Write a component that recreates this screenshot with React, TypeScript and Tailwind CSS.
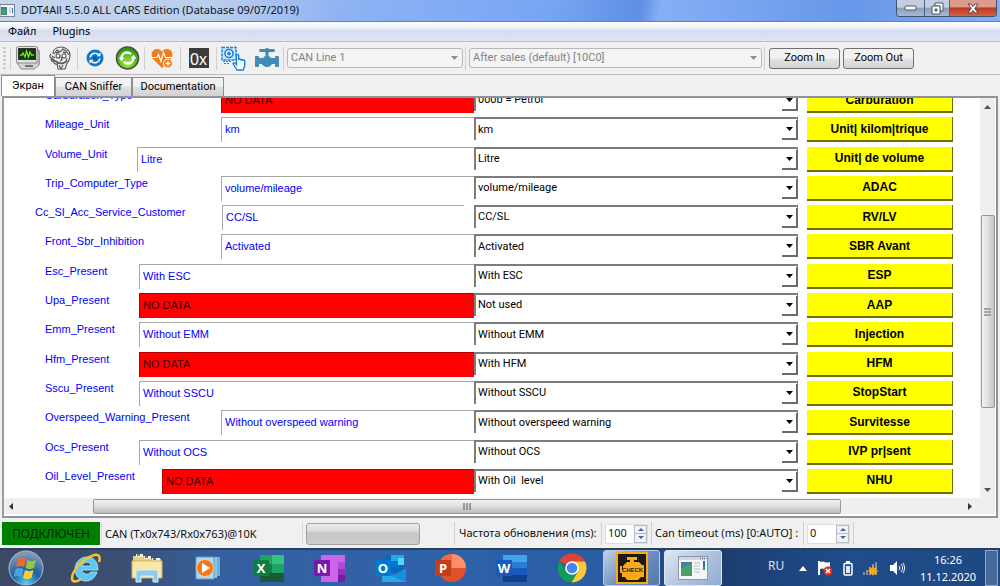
import { useState, type ReactNode } from 'react'
import clsx from 'clsx'

type Row = {
  label: string
  value: string
  option: string
  button: string
  field: string
  indent?: string
}

const WIDE = 'w-[335px]'
const NARROW = 'w-[253px]'

const ROWS: Row[] = [
  { label: 'Carburation_Type', value: 'NO DATA', option: '000b = Petrol', button: 'Carburation', field: NARROW },
  { label: 'Mileage_Unit', value: 'km', option: 'km', button: 'Unit| kilom|trique', field: NARROW },
  { label: 'Volume_Unit', value: 'Litre', option: 'Litre', button: 'Unit| de volume', field: 'w-[337px]' },
  { label: 'Trip_Computer_Type', value: 'volume/mileage', option: 'volume/mileage', button: 'ADAC', field: NARROW },
  {
    label: 'Cc_Sl_Acc_Service_Customer',
    value: 'CC/SL',
    option: 'CC/SL',
    button: 'RV/LV',
    field: 'w-[242px] mr-[10px]',
    indent: 'pl-[31px]',
  },
  { label: 'Front_Sbr_Inhibition', value: 'Activated', option: 'Activated', button: 'SBR Avant', field: NARROW },
  { label: 'Esc_Present', value: 'With ESC', option: 'With ESC', button: 'ESP', field: WIDE },
  { label: 'Upa_Present', value: 'NO DATA', option: 'Not used', button: 'AAP', field: WIDE },
  { label: 'Emm_Present', value: 'Without EMM', option: 'Without EMM', button: 'Injection', field: WIDE },
  { label: 'Hfm_Present', value: 'NO DATA', option: 'With HFM', button: 'HFM', field: WIDE },
  { label: 'Sscu_Present', value: 'Without SSCU', option: 'Without SSCU', button: 'StopStart', field: WIDE },
  {
    label: 'Overspeed_Warning_Present',
    value: 'Without overspeed warning',
    option: 'Without overspeed warning',
    button: 'Survitesse',
    field: NARROW,
  },
  { label: 'Ocs_Present', value: 'Without OCS', option: 'Without OCS', button: 'IVP pr|sent', field: WIDE },
  { label: 'Oil_Level_Present', value: 'NO DATA', option: 'With Oil\u00a0 level', button: 'NHU', field: 'w-[312px]' },
]

const TABS = ['Экран', 'CAN Sniffer', 'Documentation']

function TitleBar() {
  return (
    <header className="flex h-[22px] shrink-0 items-start justify-between border-b border-[#6c7f9e] bg-[linear-gradient(100deg,#c6d6ec_0%,#b9cdec_22%,#8fb3f3_34%,#77a5f4_55%,#5f8fe4_64%,#86aff5_66%,#6797ea_85%,#86aef0_100%)]">
      <div className="flex h-[21px] items-center gap-[6px]">
        <svg width="15" height="13" viewBox="0 0 15 13" aria-hidden="true">
          <rect x="0" y="0.5" width="14.5" height="12" fill="#f4f4f4" stroke="#7a8594" />
          <rect x="1" y="3" width="6" height="8" fill="#3f8a86" />
          <rect x="2" y="6" width="4" height="4" fill="#4d9e62" />
          <path d="M9 4h2M9 6h2M9 8h2" stroke="#b0b6bd" />
          <path d="M12.500 4v5" stroke="#2d6dc4" />
        </svg>
        <h1 className="text-[11px] text-[#0b1526]">DDT4All 5.5.0 ALL CARS Edition (Database 09/07/2019)</h1>
      </div>
      <div className="mr-[3px] flex h-[17px] overflow-hidden rounded-b-[4px] border border-t-0 border-[#3e5372]">
        <button aria-label="Minimize" className="flex w-[28px] items-center justify-center border-r border-[#4d6284] bg-[linear-gradient(#c3cfe0_45%,#8c9db8_50%,#a6b9d6)]">
          <svg width="13" height="6" viewBox="0 0 13 6"><rect x="1" y="1" width="11" height="4" rx="1" fill="#fff" stroke="#4b5567" /></svg>
        </button>
        <button aria-label="Restore" className="flex w-[25px] items-center justify-center border-r border-[#4d6284] bg-[linear-gradient(#c3cfe0_45%,#8c9db8_50%,#a6b9d6)]">
          <svg width="13" height="13" viewBox="0 0 13 13">
            <path d="M4 1h8v8h-3V4H4z" fill="#fff" stroke="#4b5567" />
            <path fillRule="evenodd" d="M1 4h8v8H1zM4 7v2h2V7z" fill="#fff" stroke="#4b5567" />
          </svg>
        </button>
        <button aria-label="Close" className="flex w-[46px] items-center justify-center bg-[linear-gradient(#dd9b8e_42%,#bd3a20_50%,#d4624a)]">
          <svg width="12" height="11" viewBox="0 0 12 11">
            <path d="M1 1h3l2 2.500L8 1h3L7.800 5.500 11 10H8L6 7.500 4 10H1l3.200-4.500z" fill="#fff" stroke="#53404a" />
          </svg>
        </button>
      </div>
    </header>
  )
}

function ToolButton({ label, wide, children }: { label: string; wide?: boolean; children: ReactNode }) {
  return (
    <button aria-label={label} title={label} className={clsx('flex h-full items-center justify-center', wide ? 'w-[35px]' : 'w-[33px]')}>
      {children}
    </button>
  )
}

function Separator() {
  return <span className="h-[23px] w-px shrink-0 bg-[#cfcfcf]" />
}

function ToolSelect({ label, value, className }: { label: string; value: string; className: string }) {
  return (
    <span className={clsx('relative flex h-[20px]', className)}>
      <select
        aria-label={label}
        disabled
        className="w-full appearance-none rounded-[3px] border border-[#b4b8bb] bg-[#f4f4f4] pl-[3px] font-['Roboto','Noto_Sans',sans-serif] text-[11px] text-[#838383] opacity-100"
      >
        <option>{value}</option>
      </select>
      <svg className="pointer-events-none absolute top-[8px] right-[5px]" width="7" height="4" viewBox="0 0 7 4" aria-hidden="true">
        <path d="M0 0h7L3.500 4z" fill="#8d8d8d" />
      </svg>
    </span>
  )
}

function Toolbar() {
  const zoomClasses =
    "h-[21px] w-[71px] rounded-[3px] border border-[#707070] bg-[linear-gradient(#f2f2f2_48%,#e3e3e3_52%,#d3d3d3)] font-['Roboto','Noto_Sans',sans-serif] text-[11px] text-black"

  return (
    <div className="flex h-[33px] shrink-0 items-center border-b border-[#bcbcbc] bg-[#f0f0f0]">
      <svg className="mr-[4px] ml-[3px]" width="3" height="24" viewBox="0 0 3 24" aria-hidden="true">
        <path d="M1.500 1v23" stroke="#b9b9b9" strokeWidth="2" strokeDasharray="2 2" />
      </svg>
      <Separator />
      <ToolButton label="Scan">
        <svg width="24" height="24" viewBox="0 0 24 24">
          <path d="M3 1h18l3 4v13l-4 2H5z" fill="#a9a9a9" />
          <rect x="0.500" y="0.500" width="21" height="17" rx="2" fill="#e2e2e2" stroke="#8b8b8b" />
          <rect x="2.500" y="2.500" width="17" height="11" fill="#12380f" stroke="#333" />
          <path d="M4 9h2l1-2 2 4 1.500-6 2 6L14 6l1.500 3H18" fill="none" stroke="#7be02c" strokeWidth="1.300" />
          <path d="M1 17l4 6h13l5-4V6l-2-2v13z" fill="#d4d4d4" stroke="#8b8b8b" />
          <path d="M9 20h8" stroke="#555" strokeWidth="1.500" />
        </svg>
      </ToolButton>
      <ToolButton label="Expert mode">
        <svg width="23" height="24" viewBox="0 0 23 24" fill="none" stroke="#555" strokeWidth="1.100">
          <path d="M4 8C4 3 8 1 12 1s9 3 9 8c0 4-1 6-3 8l-2 6H9l-1-5" fill="#ededed" />
          <path d="M5 8l3-4 3 2 3-3 3 2 3 4M2 8c-2 2-1 4 1 4-2 2 0 4 2 3-1 3 3 4 4 2l4 1 4-2 1-4" />
          <circle cx="9" cy="10" r="2" fill="#fff" />
          <circle cx="15" cy="10" r="2" fill="#fff" />
          <path d="M12 11l1 3-2 1M7 15c3 3 8 3 11-1M10 19l2 4 2-4M3 10l3 2" />
          <path d="M3 13c2 1 3 3 5 3M7 7l3-1M14 6l3 1" strokeWidth="1.600" />
        </svg>
      </ToolButton>
      <Separator />
      <ToolButton label="Refresh">
        <svg width="18" height="18" viewBox="0 0 18 18">
          <circle cx="9" cy="9" r="8.500" fill="#0f78cc" />
          <path d="M4.200 8.500a5 5 0 0 1 8.300-3M13.800 9.500a5 5 0 0 1-8.300 3" fill="none" stroke="#fff" strokeWidth="1.500" />
          <path d="M10.500 7.200h4V3.300zM7.500 10.800h-4v3.900z" fill="#fff" />
          <circle cx="9" cy="9" r="2" fill="#0a5fa8" />
        </svg>
      </ToolButton>
      <ToolButton label="Auto refresh">
        <svg width="25" height="24" viewBox="0 0 25 24">
          <defs>
            <radialGradient id="green" cx="50%" cy="75%" r="65%">
              <stop offset="0" stopColor="#a4ee3c" />
              <stop offset="1" stopColor="#2d9a15" />
            </radialGradient>
          </defs>
          <circle cx="12.500" cy="12" r="11" fill="url(#green)" stroke="#4a5548" strokeWidth="1.600" />
          <path d="M6.500 12.500c-.2-3.600 2.300-6 5.500-6 1.800 0 3.200.7 4.200 1.800" fill="none" stroke="#fff" strokeWidth="2.300" />
          <path d="M18.500 11.500c.2 3.600-2.300 6-5.500 6-1.800 0-3.200-.7-4.200-1.800" fill="none" stroke="#fff" strokeWidth="2.300" />
          <path d="M3.700 11.500h5.600L6.500 15.500zM21.300 12.500h-5.600l2.800-4z" fill="#fff" />
        </svg>
      </ToolButton>
      <Separator />
      <ToolButton label="Diagnostic" wide>
        <svg width="23" height="21" viewBox="0 0 23 21">
          <path d="M11 20L2 11C-1 7 1 1 6 1c2.500 0 4 1.300 5 3 1-1.700 2.500-3 5-3 5 0 7 6 4 10z" fill="#f07d18" />
          <path d="M0 9.500h6l1.500-3 2.500 7 2.500-9 2 5H22" fill="none" stroke="#fff" strokeWidth="1.200" />
          <circle cx="17" cy="15.500" r="4.500" fill="#f07d18" stroke="#fff" />
          <path d="M17 13v5M14.500 15.500h5" stroke="#fff" strokeWidth="1.300" />
        </svg>
      </ToolButton>
      <Separator />
      <ToolButton label="Hexadecimal" wide>
        <span className="flex h-[20px] w-[20px] items-end justify-center bg-[#3c3c3c] font-['Liberation_Sans',sans-serif] text-[16px] leading-[17px] text-white">
          0x
        </span>
      </ToolButton>
      <Separator />
      <ToolButton label="Command">
        <svg width="25" height="25" viewBox="0 0 25 25" fill="none" stroke="#1583e0">
          <rect x="1" y="1.500" width="14" height="12.500" fill="#cfe6fb" strokeDasharray="3 1" strokeWidth="1.500" />
          <circle cx="8" cy="7.500" r="4" fill="#fff" strokeWidth="1.600" />
          <circle cx="8" cy="7.500" r="1.500" fill="#1583e0" />
          <path d="M2 15.500h8M3 17.500h6" strokeDasharray="2 1" />
          <path d="M15.500 18V9.500c0-1.500 2.200-1.500 2.200 0V14c0-1.300 2-1.300 2 0v.5c0-1.300 2-1.300 2 0v.5c0-1.300 2-1.300 2 0v5l-1.500 4H16l-4-6.500c.5-1.500 2.500-.5 3.500 1z" fill="#fff" strokeWidth="1.400" />
        </svg>
      </ToolButton>
      <ToolButton label="Flow control">
        <svg width="24" height="20" viewBox="0 0 24 20" fill="#418bb5">
          <rect x="4" y="1" width="16" height="3" rx="1.500" />
          <circle cx="12" cy="2.500" r="2.500" />
          <rect x="10.500" y="4" width="3" height="5" />
          <rect x="0" y="8" width="4" height="11" rx="1" />
          <rect x="20" y="8" width="4" height="11" rx="1" />
          <path d="M4 10h4l2-2h4l2 2h4v6h-3c-1 2-3 3-5 3s-4-1-5-3H4z" />
        </svg>
      </ToolButton>
      <Separator />
      <ToolSelect label="CAN line" value="CAN Line 1" className="ml-[3px] w-[176px]" />
      <span className="ml-[2px] flex"><Separator /></span>
      <ToolSelect label="Session" value="After sales (default) [10C0]" className="ml-[3px] w-[293px]" />
      <span className="ml-[2px] flex"><Separator /></span>
      <div className="ml-[4px] flex gap-[3px]">
        <button className={zoomClasses}>Zoom In</button>
        <button className={zoomClasses}>Zoom Out</button>
      </div>
    </div>
  )
}

function ParameterRow({ row }: { row: Row }) {
  const missing = row.value === 'NO DATA'

  return (
    <div className="flex h-[25px] shrink-0">
      <div className={clsx("flex w-[470px] shrink-0 justify-between font-['Liberation_Sans',Arial,sans-serif] text-[11px] whitespace-nowrap", row.indent ?? 'pl-[41px]')}>
        <label htmlFor={row.label} className="leading-[15px] text-[#0000ff]">
          {row.label}
        </label>
        <output
          className={clsx(
            'shrink-0 border-t border-l pl-[3px] leading-[23px]',
            row.field,
            missing ? 'border-[#b40000] bg-[#ff0000] text-[#3c0000]' : 'border-[#a8a8a8] bg-white text-[#0000ff]',
          )}
        >
          {row.value}
        </output>
      </div>
      <div className="relative flex h-[23px] min-w-0 flex-1">
        <select
          id={row.label}
          className="w-full appearance-none border-t-2 border-r border-l-2 border-[#7d7d7d] bg-white pl-[2px] font-['Roboto','Noto_Sans',sans-serif] text-[11px] text-black"
        >
          <option>{row.option}</option>
        </select>
        <span className="pointer-events-none absolute right-0 bottom-0 flex h-[20px] w-[16px] items-center justify-center border-r-2 border-b-2 border-[#6c6c6c]">
          <svg width="7" height="4" viewBox="0 0 7 4" aria-hidden="true">
            <path d="M0 0h7L3.500 4z" fill="#000" />
          </svg>
        </span>
      </div>
      <button className="mr-[27px] ml-[9px] w-[146px] shrink-0 border-r border-b-2 border-[#6f6f00] bg-[#ffff00] font-['Liberation_Sans','DejaVu_Sans',sans-serif] text-[12px] font-bold text-black">
        {row.button}
      </button>
    </div>
  )
}

function VerticalScrollbar() {
  return (
    <div aria-hidden="true" className="flex w-[15px] shrink-0 flex-col items-center bg-[#efefef]">
      <svg className="mt-[7px]" width="7" height="4" viewBox="0 0 7 4"><path d="M0 4h7L3.500 0z" fill="#555" /></svg>
      <div className="flex-[107]" />
      <div className="flex w-[14px] flex-[192] items-center justify-center rounded-[2px] border border-[#979797] bg-[linear-gradient(90deg,#f3f3f3,#e0e0e2_50%,#c4c4c8)]">
        <svg width="7" height="8" viewBox="0 0 7 8"><path d="M0 1h7M0 4h7M0 7h7" stroke="#666" /></svg>
      </div>
      <div className="flex-[80]" />
      <svg className="mb-[6px]" width="7" height="4" viewBox="0 0 7 4"><path d="M0 0h7L3.500 4z" fill="#555" /></svg>
    </div>
  )
}

function HorizontalScrollbar() {
  return (
    <div aria-hidden="true" className="flex h-[16px] shrink-0 items-center bg-[#efefef] pr-[23px] pl-[5px]">
      <svg width="4" height="7" viewBox="0 0 4 7"><path d="M4 0v7L0 3.500z" fill="#333" /></svg>
      <div className="flex-[80]" />
      <div className="flex h-[15px] flex-[748] items-center justify-center rounded-[2px] border border-[#979797] bg-[linear-gradient(#f3f3f3,#dcdcde_50%,#bcbcc0)]">
        <svg width="8" height="7" viewBox="0 0 8 7"><path d="M1 0v7M4 0v7M7 0v7" stroke="#555" /></svg>
      </div>
      <div className="flex-[127]" />
      <svg width="4" height="7" viewBox="0 0 4 7"><path d="M0 0v7L4 3.500z" fill="#333" /></svg>
    </div>
  )
}

function SpinBox({ id, initial }: { id: string; initial: number }) {
  const [value, setValue] = useState(initial)

  return (
    <span className="flex h-[20px] w-[43px] border border-[#dedede] bg-white">
      <input
        id={id}
        inputMode="numeric"
        value={value}
        onChange={(event) => setValue(Number.parseInt(event.currentTarget.value, 10) || 0)}
        className="w-[28px] min-w-0 bg-white pl-[2px] text-[11px] outline-none"
      />
      <span className="flex w-[13px] flex-col">
        <button aria-label="Increase" onClick={() => setValue(value + 1)} className="flex flex-1 items-center justify-center border border-[#b9bcc4] bg-[#f1f1f1]">
          <svg width="6" height="3" viewBox="0 0 6 3"><path d="M0 3h6L3 0z" fill="#4a62b0" /></svg>
        </button>
        <button aria-label="Decrease" onClick={() => setValue(Math.max(0, value - 1))} className="flex flex-1 items-center justify-center border border-t-0 border-[#b9bcc4] bg-[#f1f1f1]">
          <svg width="6" height="3" viewBox="0 0 6 3"><path d="M0 0h6L3 3z" fill="#4a62b0" /></svg>
        </button>
      </span>
    </span>
  )
}

function StatusBar() {
  return (
    <footer className="flex h-[29px] shrink-0 items-center bg-[#f0f0f0] pl-[2px] text-[11px] whitespace-nowrap text-[#111]">
      <span className="flex h-[23px] w-[98px] items-center justify-center bg-[#008000] text-[12px] text-[#00250a]">ПОДКЛЮЧЕН</span>
      <span className="ml-[1px] flex w-[202px] justify-between border-x border-[#dadada] pl-[3px] leading-[23px]">
        CAN (Tx0x743/Rx0x763)@10K
      </span>
      <div role="progressbar" aria-label="Progress" className="ml-[3px] h-[22px] w-[114px] rounded-[3px] border border-[#a0a0a0] bg-[linear-gradient(#ededed_0%,#dadada_35%,#c6c6c6_45%,#cdcdcd_100%)]" />
      <span className="ml-[34px] flex"><Separator /></span>
      <label htmlFor="refresh" className="w-[146px] pl-[4px]">Частота обновления (ms):</label>
      <Separator />
      <span className="mx-[3px] flex"><SpinBox id="refresh" initial={100} /></span>
      <Separator />
      <label htmlFor="timeout" className="w-[151px] pl-[3px]">Can timeout (ms) [0:AUTO] :</label>
      <Separator />
      <span className="mx-[3px] flex"><SpinBox id="timeout" initial={0} /></span>
      <Separator />
    </footer>
  )
}

function OfficeIcon({ letter, badge, children }: { letter: string; badge: string; children: ReactNode }) {
  return (
    <svg width="32" height="28" viewBox="0 0 32 28">
      {children}
      <rect x="1" y="6" width="16" height="16" rx="1" fill={badge} />
      <text x="9" y="18.500" textAnchor="middle" fontFamily="Open Sans, sans-serif" fontSize="13" fontWeight="700" fill="#fff">
        {letter}
      </text>
    </svg>
  )
}

const APPS: { name: string; icon: ReactNode }[] = [
  {
    name: 'Internet Explorer',
    icon: (
      <svg width="32" height="32" viewBox="0 0 32 32">
        <path fillRule="evenodd" d="M17 5c7 0 11 5 11 13H12c0 4 6 6 9 2h6c-2 6-6 9-11 9C9 29 5 23 5 17S10 5 17 5zM12 14h9c0-5-8-5-9 0z" fill="#5cc8f4" stroke="#b6ecff" strokeWidth="0.800" />
        <path d="M29 10c2-6-1-9-7-6C13 7 2 19 2 26c0 5 5 4 9 1" fill="none" stroke="#f6c32b" strokeWidth="2.500" />
      </svg>
    ),
  },
  {
    name: 'Explorer',
    icon: (
      <svg width="32" height="30" viewBox="0 0 32 30">
        <path d="M2 3h11l2 3h15v18H2z" fill="#e8cd7a" />
        <path d="M5 1h7v3H5z" fill="#f4f0dc" /><path d="M13 3h7v3h-7z" fill="#f4f0dc" /><path d="M21 5h8v3h-8z" fill="#f4f0dc" />
        <path d="M6 2h3" stroke="#2fae3b" strokeWidth="2" /><path d="M14 4h3" stroke="#d4452c" strokeWidth="2" /><path d="M22 6h3" stroke="#2e7fd0" strokeWidth="2" />
        <path d="M1 8h30v17H1z" fill="#f7e7a8" stroke="#d3b455" />
        <path d="M5 29V20c0-2 1-3 3-3h16c2 0 3 1 3 3v9h-5v-6H10v6z" fill="#8fcbef" stroke="#d5f0ff" />
      </svg>
    ),
  },
  {
    name: 'Media Player',
    icon: (
      <svg width="28" height="26" viewBox="0 0 28 26">
        <path d="M6 2h20v19H6z" fill="#6fb0d8" /><path d="M4 2h19v21H4z" fill="#8cc6e6" /><path d="M2 2h18v22H2z" fill="#a9d8f0" stroke="#5c9cc4" />
        <circle cx="11" cy="13" r="8.500" fill="#ee7a1b" stroke="#fbd1a2" />
        <path d="M8 8l8 5-8 5z" fill="#fff" />
      </svg>
    ),
  },
  {
    name: 'Excel',
    icon: (
      <OfficeIcon letter="X" badge="#107c41">
        <path d="M8 1h12v9H8z" fill="#21a366" /><path d="M20 1h12v9H20z" fill="#33c481" /><path d="M8 10h12v9H8z" fill="#1a7a47" /><path d="M20 10h12v9H20z" fill="#21a366" /><path d="M8 19h24v9H8z" fill="#185c37" />
      </OfficeIcon>
    ),
  },
  {
    name: 'OneNote',
    icon: (
      <OfficeIcon letter="N" badge="#7719aa">
        <path d="M8 1h24v27H8z" fill="#ca64ea" /><path d="M25 8h7v7h-7z" fill="#ae4bd5" /><path d="M25 15h7v6h-7z" fill="#9332bf" /><path d="M25 21h7v7h-7z" fill="#7719aa" />
      </OfficeIcon>
    ),
  },
  {
    name: 'Outlook',
    icon: (
      <OfficeIcon letter="O" badge="#0078d4">
        <path d="M11 1h19v17H11z" fill="#0a68b8" /><path d="M17 1h13v6H17z" fill="#28a8ea" /><path d="M24 4h6v7h-6z" fill="#50d9ff" /><path d="M17 7h7v6h-7z" fill="#0078d4" />
        <path d="M8 17l12 4 12-7v14H8z" fill="#1490df" /><path d="M8 18l24 10H8z" fill="#28a8ea" />
      </OfficeIcon>
    ),
  },
  {
    name: 'PowerPoint',
    icon: (
      <OfficeIcon letter="P" badge="#c43e1c">
        <path d="M18 0a14 14 0 0 0 0 28 14 14 0 0 0 14-14H18z" fill="#e0522c" /><path d="M18 0a14 14 0 0 1 14 14H18z" fill="#ff8f6b" /><path d="M4 14a14 14 0 0 1 14-14v14z" fill="#ed6c47" />
      </OfficeIcon>
    ),
  },
  {
    name: 'Word',
    icon: (
      <OfficeIcon letter="W" badge="#185abd">
        <path d="M8 1h24v7H8z" fill="#41a5ee" /><path d="M8 8h24v6H8z" fill="#2b7cd3" /><path d="M8 14h24v7H8z" fill="#185abd" /><path d="M8 21h24v7H8z" fill="#103f91" />
      </OfficeIcon>
    ),
  },
  {
    name: 'Chrome',
    icon: (
      <svg width="30" height="30" viewBox="0 0 30 30">
        <path d="M15 15L2.400 8A14.500 14.500 0 0 1 28 8.500H15z" fill="#db4437" />
        <path d="M15 15l6 3.500L14.500 29.500A14.500 14.500 0 0 1 2.400 8l6.600 10.500z" fill="#0f9d58" />
        <path d="M15 8.500h13a14.500 14.500 0 0 1-13.500 21L21 18.500z" fill="#fdc93a" />
        <circle cx="15" cy="15" r="6.800" fill="#fff" />
        <circle cx="15" cy="15" r="5.300" fill="#4285f4" />
      </svg>
    ),
  },
]

function Tray() {
  return (
    <div className="flex h-full items-center text-white">
      <span className="w-[26px] pb-[5px] text-[12px] text-[#d5e2f5]">RU</span>
      <div className="flex w-[111px] items-center justify-between pl-[5px]">
        <svg width="8" height="5" viewBox="0 0 8 5" aria-hidden="true"><path d="M0 5h8L4 0z" fill="#fff" /></svg>
        <svg width="16" height="16" viewBox="0 0 16 16" aria-label="Action center">
          <path d="M2 1v14" stroke="#fff" strokeWidth="2" /><path d="M3 2c4-2 5 2 10 0v7c-5 2-6-2-10 0z" fill="#fff" />
          <circle cx="11" cy="11" r="4.500" fill="#d92f1e" /><path d="M9 9l4 4M13 9l-4 4" stroke="#fff" strokeWidth="1.500" />
        </svg>
        <svg width="10" height="15" viewBox="0 0 10 15" aria-label="Battery">
          <rect x="3" y="0" width="4" height="2" fill="#fff" /><rect x="1" y="2.500" width="8" height="11.500" rx="1" fill="none" stroke="#fff" strokeWidth="1.500" /><rect x="3" y="5" width="4" height="7" fill="#dfe8f4" />
        </svg>
        <svg width="17" height="15" viewBox="0 0 17 15" aria-label="Network">
          <path d="M2 11v3M5 9v5M8 6v8M11 3v11M14 1v13" stroke="#7f8fa8" strokeWidth="2" />
          <path d="M11 4l1 3 3-1-1 3 3 1-3 1 1 3-3-1-1 2-1-2-3 1 1-3-3-1 3-1-1-3 3 1z" fill="#f5a81c" />
        </svg>
        <svg width="16" height="14" viewBox="0 0 16 14" aria-label="Volume">
          <path d="M1 4h3l4-4v14l-4-4H1z" fill="#fff" />
          <path d="M10 5c1 1 1 3 0 4M12 3c2 2 2 6 0 8M14 2c2 3 2 7 0 10" fill="none" stroke="#fff" />
        </svg>
      </div>
      <time className="ml-[11px] w-[64px] text-center text-[11px] leading-[17px]">
        16:26
        <br />
        11.12.2020
      </time>
      <button aria-label="Show desktop" className="ml-[5px] h-full w-[13px] border border-[#8ea9cf] bg-[#ffffff30]" />
    </div>
  )
}

function Taskbar() {
  return (
    <nav aria-label="Taskbar" className="flex h-[38px] shrink-0 items-center border-t-2 border-[#26405f] bg-[linear-gradient(90deg,#3a4a64_0%,#3c4f72_12%,#3560a0_22%,#2f62a8_40%,#2b5da4_60%,#1c3d70_72%,#1f4d8a_85%,#1e4883_100%)]">
      <button aria-label="Start" className="flex w-[52px] justify-center">
        <svg width="36" height="36" viewBox="0 0 36 36">
          <defs>
            <radialGradient id="orb" cx="50%" cy="95%" r="85%">
              <stop offset="0" stopColor="#4fd0f5" />
              <stop offset="0.500" stopColor="#1d5f9c" />
              <stop offset="1" stopColor="#7f95b4" />
            </radialGradient>
          </defs>
          <circle cx="18" cy="18" r="17" fill="url(#orb)" stroke="#a8bccf" />
          <path d="M10 9c3-1.500 5-1.500 8 0l-2 8c-3-1.500-5-1.500-8 0z" fill="#ef6a2a" />
          <path d="M19.500 10c3 1.500 5 1.500 8.500 0l-2 8c-3 1.500-5.500 1.500-8.500 0z" fill="#92c83e" />
          <path d="M7.500 19c3-1.500 5-1.500 8 0l-2 8c-3-1.500-5-1.500-8 0z" fill="#4ba3e6" />
          <path d="M17 20c3 1.500 5.500 1.500 8.500 0l-2 8c-3 1.500-5.500 1.500-8.500 0z" fill="#fbcd35" />
        </svg>
      </button>
      <div className="ml-[4px] flex w-[546px] shrink-0">
        {APPS.map((app) => (
          <button key={app.name} aria-label={app.name} className="flex flex-1 items-center justify-center">
            {app.icon}
          </button>
        ))}
      </div>
      <div className="ml-px flex h-full gap-[4px]">
        <button aria-label="DDT4All launcher" className="flex w-[57px] items-center justify-center rounded-[3px] border border-[#b9cde6] bg-[linear-gradient(135deg,#c3d2e6,#7290bd_50%,#5478b0)]">
          <svg width="32" height="32" viewBox="0 0 32 32">
            <rect x="1" y="1" width="30" height="30" fill="#1d1a14" stroke="#f9a818" strokeWidth="2" />
            <path d="M11 5h10v3h-3v2h5l3 3h2v12h-3l-3 3H11l-2-3H6v-4H4v-7h2v4h1v-4l4-4h3V8h-3z" fill="#fba919" />
            <text x="16.500" y="20" textAnchor="middle" fontFamily="Liberation Sans, sans-serif" fontSize="6" fontWeight="700" fill="#1d1a14">CHECK</text>
          </svg>
        </button>
        <button aria-label="DDT4All" className="flex w-[58px] items-center justify-center rounded-[3px] border border-[#dfe9f6] bg-[linear-gradient(135deg,#dfe8f4,#b3c5df_50%,#92abd0)]">
          <svg width="30" height="24" viewBox="0 0 30 24">
            <rect x="0.500" y="0.500" width="29" height="23" fill="#f4f6f8" stroke="#8c98a8" />
            <path d="M1 2.500h28" stroke="#d0d6de" strokeWidth="3" />
            <rect x="3" y="6" width="11" height="14" fill="#3c7fae" />
            <path d="M3 20V13c4-5 8-4 11-6v13z" fill="#4a9f6b" />
            <path d="M16 7h6M16 10h6M16 13h6M16 16h6" stroke="#b8c0ca" />
            <path d="M26 5v9" stroke="#2c62c8" strokeWidth="2" /><path d="M26 10v4" stroke="#3a9b46" strokeWidth="2" />
            <path d="M22 2.500h6" stroke="#556" strokeDasharray="1 1" />
          </svg>
        </button>
      </div>
      <div className="mr-[2px] ml-auto h-full">
        <Tray />
      </div>
    </nav>
  )
}

export default function App() {
  const [activeTab, setActiveTab] = useState(TABS[0])

  return (
    <div className="flex h-screen flex-col overflow-hidden bg-[#f0f0f0] font-['Segoe_UI','Noto_Sans','Open_Sans',sans-serif]">
      <TitleBar />
      <nav aria-label="Menu" className="flex h-[20px] shrink-0 items-center gap-[16px] border-b border-[#b6bccc] bg-[linear-gradient(#ffffff,#eef1f8_30%,#d5dcee_45%,#e0e5f5)] pl-[8px] text-[11px] text-black">
        <button>Файл</button>
        <button>Plugins</button>
      </nav>
      <Toolbar />
      <div role="tablist" className="flex h-[21px] shrink-0 items-end pl-[1px] font-['Roboto','Noto_Sans',sans-serif] text-[11px] text-black">
        {TABS.map((tab) => (
          <button
            key={tab}
            role="tab"
            aria-selected={tab === activeTab}
            onClick={() => setActiveTab(tab)}
            className={clsx(
              'border border-b-0 border-[#8c8e94]',
              tab === 'Экран' ? 'w-[54px]' : tab === 'CAN Sniffer' ? 'w-[77px]' : 'w-[92px]',
              tab === activeTab ? 'h-[21px] bg-white' : 'h-[19px] bg-[linear-gradient(#f2f2f2_45%,#e0e0e0_50%,#d2d2d2)]',
            )}
          >
            {tab}
          </button>
        ))}
      </div>
      <main className="mx-[2px] mb-[1px] flex min-h-0 flex-1 flex-col border-2 border-t-2 border-[#8f939c] border-l-[#9a9ca6] bg-white pr-[1px] pb-[2px]">
        <div className="flex min-h-0 flex-1">
          <div className="flex min-w-0 flex-1 flex-col justify-end overflow-hidden pb-[4px]">
            <div className="flex h-[406px] shrink-0 flex-col justify-between">
              {ROWS.map((row) => (
                <ParameterRow key={row.label} row={row} />
              ))}
            </div>
          </div>
          <VerticalScrollbar />
        </div>
        <HorizontalScrollbar />
      </main>
      <StatusBar />
      <Taskbar />
    </div>
  )
}
